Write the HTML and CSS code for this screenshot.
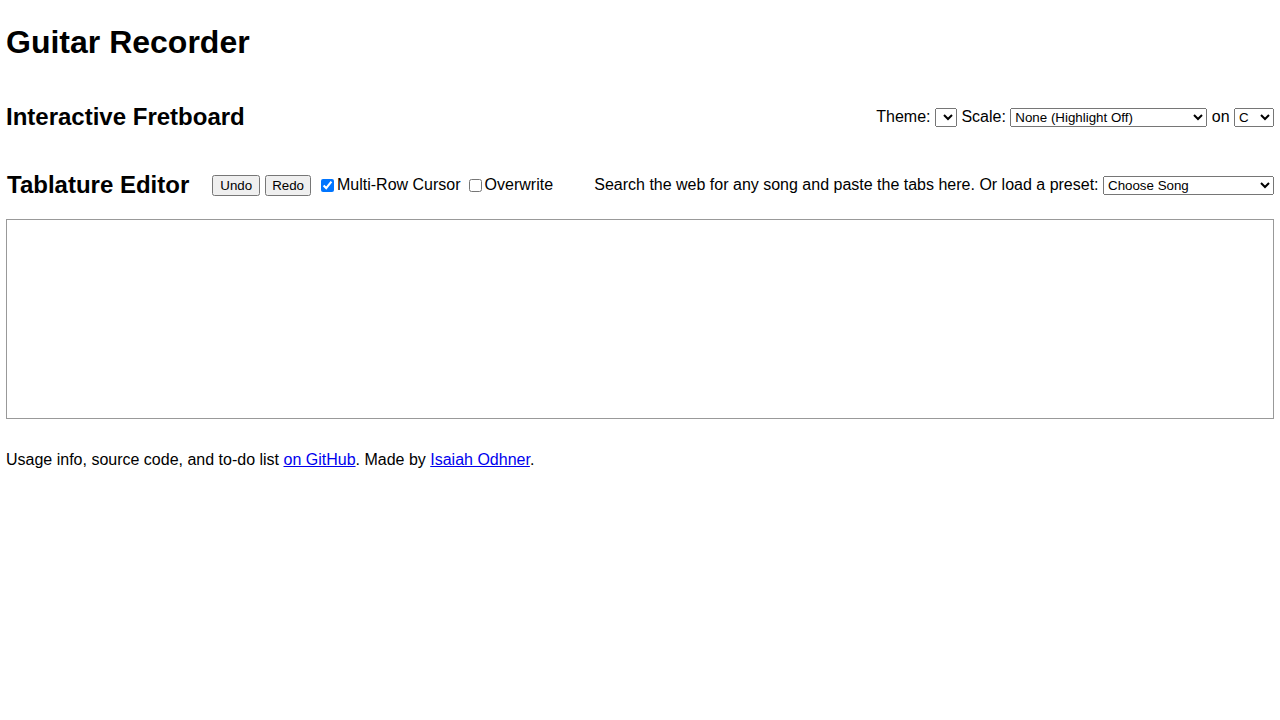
FILE: index.html
```html
<!DOCTYPE html>
<html lang="en">
<head>
    <meta charset="UTF-8">
    <title>Guitar Recorder</title>
    <link rel="stylesheet" href="styles.css">
</head>
<body>
    <h1>Guitar Recorder</h1>

    <div class="section-head">
        <h2>Interactive Fretboard</h2>
        <div class="controls">
            Theme: <select class="theme-select"><option></option></select>
            Scale: <select class="scale-select"><option>None (Highlight Off)</option></select>
            on <select class="key-select"><option>C</option></select>
        </div>
    </div>

    <div class="section-head editor-head">
        <div class="editor-left">
            <h2>Tablature Editor</h2>
            <button>Undo</button>
            <button>Redo</button>
            <label><input type="checkbox" checked>Multi-Row Cursor</label>
            <label><input type="checkbox">Overwrite</label>
        </div>
        <div class="controls">
            Search the web for any song and paste the tabs here. Or load a preset:
            <select class="song-select"><option>Choose Song</option></select>
        </div>
    </div>

    <textarea class="tabs"></textarea>

    <p class="footer">Usage info, source code, and to-do list <a href="#">on GitHub</a>. Made by <a href="#">Isaiah Odhner</a>.</p>
</body>
</html>
```

FILE: styles.css
```css
body {
    font-family: Arial, "Liberation Sans", sans-serif;
    margin: 8px 6px;
    color: black;
}
h1 {
    font-size: 32px;
    margin: 16px 0 0 0;
}
h2 {
    font-size: 24px;
    margin: 0;
}
.section-head {
    display: flex;
    justify-content: space-between;
    align-items: center;
    margin-top: 42px;
}
.editor-head {
    margin-top: 40px;
}
.editor-left {
    display: flex;
    align-items: center;
}
.editor-left h2 {
    margin-right: 23px;
    margin-left: 1px;
}
.editor-left button {
    font-family: Arial, "Liberation Sans", sans-serif;
    font-size: 13.33px;
    margin-right: 5px;
}
.editor-left button + button {
    padding: 1px 5px;
}
.editor-left label {
    margin-right: 3px;
    display: flex;
    align-items: center;
}
.editor-left input {
    margin: 0 3px 0 5px;
}
.controls select {
    font-family: Arial, "Liberation Sans", sans-serif;
    font-size: 13.33px;
}
.scale-select {
    width: 197px;
}
.song-select {
    width: 171px;
}
.key-select {
    width: 40px;
}
.tabs {
    display: block;
    box-sizing: border-box;
    width: 100%;
    height: 200px;
    margin-top: 20px;
    border: 1px solid #999;
    resize: none;
}
.footer {
    margin-top: 32px;
}
a {
    color: #0000ee;
}
```
